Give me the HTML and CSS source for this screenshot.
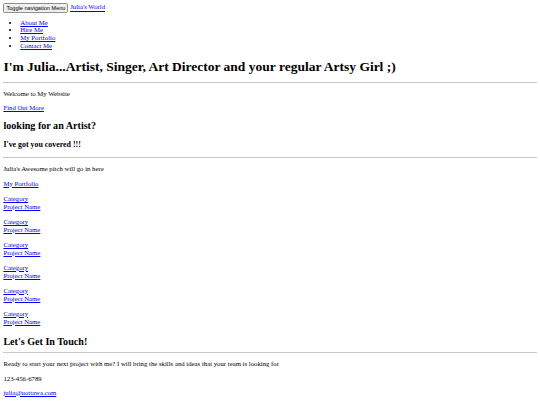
FILE: index.html
```html
<!DOCTYPE html>
<html lang="en">
<head>
    <meta charset="UTF-8">
    <meta name="viewport" content="width=device-width, initial-scale=1.0">
    <title>Julia's World</title>
    <link rel="stylesheet" href="styles.css">
</head>
<body>

    <nav class="navbar" id="mainNav">
        <button class="navbar-toggler" type="button">Toggle navigation Menu</button>
        <a class="navbar-brand" href="#page-top">Julia's World</a>
        <ul class="navbar-nav">
            <li><a href="#about">About Me</a></li>
            <li><a href="#services">Hire Me</a></li>
            <li><a href="#portfolio">My Portfolio</a></li>
            <li><a href="#contact">Contact Me</a></li>
        </ul>
    </nav>

    <header class="masthead">
        <h1>I'm Julia...Artist, Singer, Art Director and your regular Artsy Girl ;)</h1>
        <hr>
        <p>Welcome to My Website</p>
        <p><a href="#about">Find Out More</a></p>
    </header>

    <section id="about">
        <h2>looking for an Artist?</h2>
        <h3>I've got you covered !!!</h3>
        <hr>
        <p>Julia's Awesome pitch will go in here</p>
        <p><a href="#services">My Portfolio</a></p>
    </section>

    <section id="portfolio">
        <p class="portfolio-box"><a href="#">Category</a><br><a href="#">Project Name</a></p>
        <p class="portfolio-box"><a href="#">Category</a><br><a href="#">Project Name</a></p>
        <p class="portfolio-box"><a href="#">Category</a><br><a href="#">Project Name</a></p>
        <p class="portfolio-box"><a href="#">Category</a><br><a href="#">Project Name</a></p>
        <p class="portfolio-box"><a href="#">Category</a><br><a href="#">Project Name</a></p>
        <p class="portfolio-box"><a href="#">Category</a><br><a href="#">Project Name</a></p>
    </section>

    <section id="contact">
        <h2 class="contact-heading">Let's Get In Touch!</h2>
        <hr>
        <p>Ready to start your next project with me? I will bring the skills and ideas that your team is looking for</p>
        <p class="contact-line">123-456-6789</p>
        <p class="contact-line"><a href="mailto:julia@uottawa.com">julia@uottawa.com</a></p>
    </section>

</body>
</html>
```

FILE: styles.css
```css
body {
    margin: 3.4px;
    font-family: "Liberation Serif", "Times New Roman", serif;
    font-size: 6.75px;
    line-height: 1.14;
    color: #000;
    background-color: #fff;
}

a {
    color: #0000ee;
}

.navbar-toggler {
    font-family: "Liberation Sans", Arial, sans-serif;
    font-size: 5.6px;
    line-height: 1.15;
    padding: 0.4px 2px;
    margin: 0;
    color: #000;
    background-color: #efefef;
    border: 1px solid #8f8f8f;
    border-radius: 1.5px;
}

.navbar-nav {
    margin: 6px 0;
    padding-left: 16.9px;
}

h1 {
    font-size: 13.5px;
    margin: 10px 0 7px;
}

h2 {
    font-size: 10.1px;
    margin: 8.1px 0;
}

h3 {
    font-size: 7.9px;
    margin: 8.6px 0 7.8px;
}

p {
    margin: 7px 0;
}

.portfolio-box {
    margin: 7.6px 0;
}

.contact-heading {
    margin: 10.3px 0 5px;
}

.contact-line {
    margin: 6.2px 0;
}

hr {
    border: 0;
    border-top: 1px solid #c8c8c8;
    margin: 5px 0;
}
```
